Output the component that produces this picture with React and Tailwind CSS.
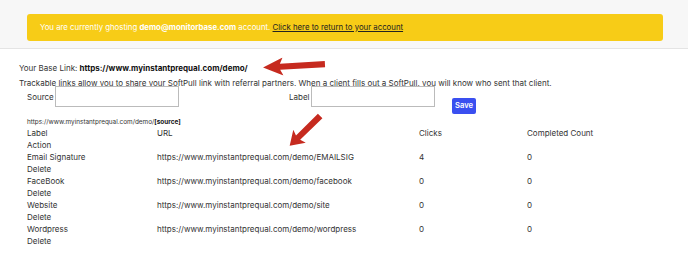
const rows = [
  { label: "Email Signature", url: "https://www.myinstantprequal.com/demo/EMAILSIG", clicks: 4, done: 0 },
  { label: "FaceBook", url: "https://www.myinstantprequal.com/demo/facebook", clicks: 0, done: 0 },
  { label: "Website", url: "https://www.myinstantprequal.com/demo/site", clicks: 0, done: 0 },
  { label: "Wordpress", url: "https://www.myinstantprequal.com/demo/wordpress", clicks: 0, done: 0 },
];

function Arrow({ className, w, rotate }) {
  return (
    <svg className={className} width={w} height="18" viewBox="0 0 64 18" preserveAspectRatio="none" style={{ transform: `rotate(${rotate}deg)` }}>
      <path d="M1 9 L21 0 L18 6 L63 5.5 L63 12 L18 12 L21 18 Z" fill="#c62a1f" />
    </svg>
  );
}

export default function App() {
  return (
    <div className="relative w-[688px] h-[254px] bg-white text-[#333] text-[8px] font-[family-name:Inter] overflow-hidden">
      <div className="bg-[#f7f7f7] border-b border-[#e4e4e4] pt-[14px] pb-[7px] pl-[27px] pr-[25px]">
        <div className="h-[27px] rounded-[3px] bg-[#f7cc17] flex items-center px-[13px] text-white text-[7.8px] whitespace-pre">
          <span>You are currently ghosting <b>demo@monitorbase.com</b> account. </span>
          <span className="text-[#222] underline">Click here to return to your account</span>
        </div>
      </div>

      <div className="pl-[19px] pt-[12px]">
        <div className="h-[14px] leading-[14px]">
          Your Base Link: <b className="text-[#111]">https://www.myinstantprequal.com/demo/</b>
        </div>
        <div className="h-[12px] leading-[12px] mt-[2px] whitespace-nowrap">
          Trackable links allow you to share your SoftPull link with referral partners. When a client fills out a SoftPull, you will know who sent that client.
        </div>

        <div className="flex items-start pl-[8px] -mt-[3px]">
          <label className="flex items-center">
            <span className="w-[28px] whitespace-nowrap">Source</span>
            <span className="w-[124px] h-[21px] border border-[#bbb] bg-white" />
          </label>
          <label className="flex items-center ml-[110px]">
            <span className="w-[22px] whitespace-nowrap">Label</span>
            <span className="w-[124px] h-[21px] border border-[#bbb] bg-white" />
          </label>
          <button className="ml-[17px] mt-[12px] w-[24px] h-[16px] rounded-[2px] bg-[#3a4ff0] text-white text-[7.6px] font-semibold leading-[16px]">
            Save
          </button>
        </div>

        <div className="pl-[8px] mt-[3px] text-[6.4px] leading-[10px]">
          https://www.myinstantprequal.com/demo/<b className="text-[#111]">[source]</b>
        </div>

        <div className="pl-[8px] leading-[12px]">
          <div className="grid grid-cols-[130px_262px_108px_1fr]">
            <span>Label</span>
            <span>URL</span>
            <span>Clicks</span>
            <span>Completed Count</span>
          </div>
          <div>Action</div>
          {rows.map((r) => (
            <div key={r.label}>
              <div className="grid grid-cols-[130px_262px_108px_1fr]">
                <span>{r.label}</span>
                <span>{r.url}</span>
                <span>{r.clicks}</span>
                <span>{r.done}</span>
              </div>
              <div>Delete</div>
            </div>
          ))}
        </div>
      </div>

      <Arrow className="absolute left-[262px] top-[57px]" w={64} rotate={-3} />
      <Arrow className="absolute left-[283px] top-[122px]" w={44} rotate={-44} />
    </div>
  );
}
